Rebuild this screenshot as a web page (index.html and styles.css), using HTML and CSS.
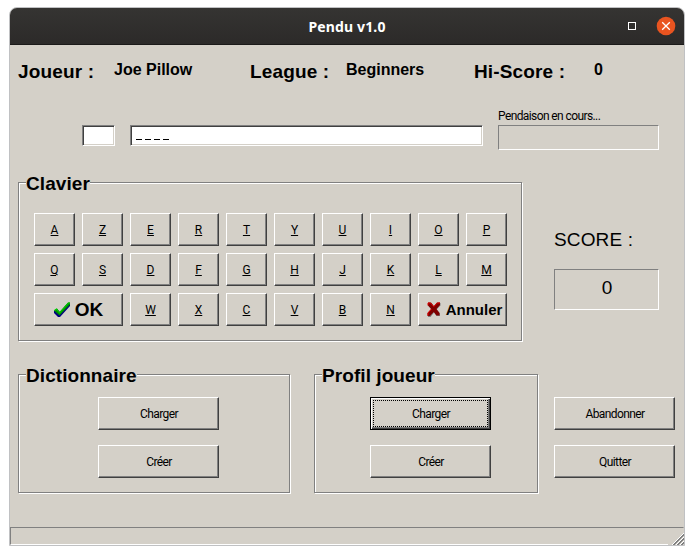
FILE: index.html
```html
<!DOCTYPE html>
<html lang="fr">
<head>
<meta charset="utf-8">
<title>Pendu v1.0</title>
<link rel="stylesheet" href="styles.css">
</head>
<body>
<div class="window">
  <header class="titlebar">
    <span class="title">Pendu v1.0</span>
    <svg class="controls" width="60" height="36" viewBox="0 0 60 36">
      <rect x="4.500" y="14.500" width="7" height="7" fill="none" stroke="#fff"/>
      <circle cx="42" cy="18" r="9.300" fill="#e95420"/>
      <path d="M38.200 14.200l7.600 7.600M45.800 14.200l-7.600 7.600" stroke="#fff" stroke-width="1.300"/>
    </svg>
  </header>
  <main class="client">
    <section class="info">
      <b class="label">Joueur :</b><b class="value">Joe Pillow</b>
      <b class="label">League :</b><b class="value">Beginners</b>
      <b class="label">Hi-Score :</b><b class="value">0</b>
    </section>
    <section class="guess">
      <div class="field letter"></div>
      <div class="field word"><i></i><i></i><i></i><i></i></div>
      <div class="progress">
        <div class="small hanging">Pendaison en cours...</div>
        <div class="sunken bar"></div>
      </div>
    </section>
    <section class="play">
      <fieldset class="group keyboard">
        <legend class="legend">Clavier</legend>
        <div class="keys">
          <button class="btn"><u>A</u></button><button class="btn"><u>Z</u></button><button class="btn"><u>E</u></button><button class="btn"><u>R</u></button><button class="btn"><u>T</u></button><button class="btn"><u>Y</u></button><button class="btn"><u>U</u></button><button class="btn"><u>I</u></button><button class="btn"><u>O</u></button><button class="btn"><u>P</u></button>
          <button class="btn"><u>Q</u></button><button class="btn"><u>S</u></button><button class="btn"><u>D</u></button><button class="btn"><u>F</u></button><button class="btn"><u>G</u></button><button class="btn"><u>H</u></button><button class="btn"><u>J</u></button><button class="btn"><u>K</u></button><button class="btn"><u>L</u></button><button class="btn"><u>M</u></button>
          <button class="btn wide ok">
            <svg width="17" height="16" viewBox="0 0 17 16">
              <path d="M0 9l3-2 3 3L14 1h2v3L6 15H4L0 11z" fill="#000080"/>
              <path d="M0 8.500l3-2 2.500 3.500L14 0.500h2V2.500L5.500 13.500z" fill="#008c00"/>
              <path d="M0.500 8.500l2-1.500 3 4L14.500 1H16" fill="none" stroke="#00d000" stroke-width="1.100"/>
            </svg>OK</button>
          <button class="btn"><u>W</u></button><button class="btn"><u>X</u></button><button class="btn"><u>C</u></button><button class="btn"><u>V</u></button><button class="btn"><u>B</u></button><button class="btn"><u>N</u></button>
          <button class="btn wide cancel">
            <svg width="14" height="15" viewBox="0 0 14 15">
              <path d="M2 1h2.500L7.500 5 11 1h2.500v2.500L9.500 7.500l3.500 4V14H9.500L7 10.500 3.500 15H1v-3L4.500 7.500 1.500 4z" fill="#808080"/>
              <path d="M1 0.500h3L6.800 4.200 10 0.500h3V3L9.500 7l3 4v2.500H9.500L6.800 10 3 14H0.500v-3L4.200 7 1 3.500z" fill="#800000"/>
              <path d="M1 3.500V1h2.500L6.800 4.700 10.300 1H13M4.500 7L1 11v2.500" fill="none" stroke="#e00000"/>
            </svg>Annuler</button>
        </div>
      </fieldset>
      <div class="score">
        <div class="score-label">SCORE :</div>
        <div class="sunken score-value">0</div>
      </div>
    </section>
    <section class="actions">
      <fieldset class="group dictionary">
        <legend class="legend">Dictionnaire</legend>
        <div class="stack"><button class="btn">Charger</button><button class="btn">Créer</button></div>
      </fieldset>
      <fieldset class="group profile">
        <legend class="legend">Profil joueur</legend>
        <div class="stack"><button class="btn default">Charger</button><button class="btn">Créer</button></div>
      </fieldset>
      <div class="stack"><button class="btn">Abandonner</button><button class="btn">Quitter</button></div>
    </section>
    <footer class="status">
      <svg width="17" height="12" viewBox="0 0 17 12" shape-rendering="crispEdges">
        <path d="M0 12h17V0z" fill="#d4d0c8"/>
        <path d="M5 12L17 0M9 12l8-8M13 12l4-4" stroke="#fff"/>
        <path d="M6 12L17 1M7 12L17 2M10 12l7-7M11 12l6-6M14 12l3-3M15 12l2-2" stroke="#808080"/>
      </svg>
    </footer>
  </main>
</div>
</body>
</html>
```
FILE: styles.css
```css
* { box-sizing: border-box; }
body {
  margin: 0;
  padding: 7px 9px;
  background: #fff;
  color: #000;
  font-family: "Liberation Sans", sans-serif;
}
.window {
  width: 676px;
  height: 539px;
  border: 1px solid #c0c1c3;
  border-radius: 8px 8px 0 0;
  overflow: hidden;
  background: #d4d0c8;
}
.titlebar {
  height: 37px;
  display: grid;
  grid-template-columns: 60px 1fr 60px;
  background: linear-gradient(#353432, #2c2a29);
  border-bottom: 1px solid #1b1a19;
}
.title {
  grid-column: 2;
  text-align: center;
  font: bold 14px/37px "Noto Sans", sans-serif;
  letter-spacing: 0.15px;
  color: #fff;
}
.client {
  height: 500px;
  display: flex;
  flex-direction: column;
}
.info {
  display: grid;
  grid-template-columns: 96px 136px 96px 128px 120px auto;
  padding: 14px 0 0 8px;
  height: 80px;
  white-space: nowrap;
}
.label { font-size: 19px; line-height: 26px; letter-spacing: 0.15px; }
.value { font-size: 16px; line-height: 22px; }
.guess {
  display: flex;
  height: 57px;
  padding-left: 72px;
  gap: 15px;
}
.field {
  height: 21px;
  background: #fff;
  border: 1px solid;
  border-color: #808080 #fff #fff #808080;
  box-shadow: inset 1px 1px #404040, inset -1px -1px #d4d0c8;
}
.letter { width: 33px; }
.word {
  width: 353px;
  display: flex;
  align-items: flex-end;
  gap: 3px;
  padding: 0 0 5px 5px;
}
.word i { width: 6px; height: 1px; background: #000; }
.small, .btn {
  font: 12px/13px Roboto, sans-serif;
  letter-spacing: -0.6px;
}
.hanging { margin-top: -15px; height: 15px; white-space: nowrap; }
.sunken {
  border: 1px solid;
  border-color: #808080 #fff #fff #808080;
}
.bar { width: 161px; height: 25px; }
.play { display: flex; height: 192px; padding-left: 8px; }
.group {
  position: relative;
  margin: 0;
  padding: 0;
  border: 1px solid #808080;
  box-shadow: 1px 1px #fff, inset 1px 1px #fff;
}
.legend {
  position: absolute;
  left: 7px;
  top: -11px;
  padding: 0;
  background: #d4d0c8;
  font-weight: bold;
  font-size: 19px;
  line-height: 24px;
  letter-spacing: 0.07px;
}
.keyboard { width: 504px; height: 159px; }
.keys {
  display: grid;
  grid-template-columns: repeat(10, 41px);
  grid-auto-rows: 33px;
  gap: 7px;
  padding: 30px 0 0 15px;
}
.btn {
  margin: 0;
  padding: 1px 0 0 1px;
  height: 33px;
  color: #000;
  background: #d4d0c8;
  border: 1px solid;
  border-color: #fff #404040 #404040 #fff;
  border-radius: 0;
  box-shadow: inset -1px -1px #808080;
}
.keys .btn { padding-left: 0; }
.btn u {
  letter-spacing: 0;
  text-decoration-thickness: 1px;
  text-underline-offset: 1px;
}
.wide {
  grid-column: span 2;
  display: flex;
  align-items: center;
  justify-content: center;
  font-family: "Liberation Sans", sans-serif;
  font-weight: bold;
  letter-spacing: 0;
}
.keys .ok { font-size: 19px; gap: 4px; padding-top: 0; }
.keys .cancel { font-size: 15px; gap: 5px; padding: 0 0 0 4px; }
.score { padding: 46px 0 0 32px; }
.score-label { font-size: 19px; line-height: 24px; height: 41px; letter-spacing: 0.15px; }
.score-value {
  width: 105px;
  height: 41px;
  padding-left: 1px;
  text-align: center;
  font-size: 19px;
  line-height: 36px;
}
.actions { display: flex; height: 153px; padding-left: 8px; }
.dictionary { width: 272px; height: 119px; padding-left: 79px; }
.profile { width: 224px; height: 119px; margin-left: 24px; padding-left: 55px; }
.stack {
  display: flex;
  flex-direction: column;
  gap: 15px;
  padding-top: 22px;
}
.actions > .stack { padding-top: 23px; margin-left: 16px; }
.stack .btn { width: 121px; }
.default {
  border-color: #000;
  box-shadow: inset 1px 1px #fff, inset -1px -1px #404040, inset -2px -2px #808080;
  outline: 1px dotted #000;
  outline-offset: -4px;
}
.status {
  height: 18px;
  display: flex;
  justify-content: flex-end;
  align-items: flex-end;
  border: 1px solid;
  border-color: #808080 #d4d0c8 #fff #808080;
}
.status svg { margin: 0 -1px -1px 0; }
```
